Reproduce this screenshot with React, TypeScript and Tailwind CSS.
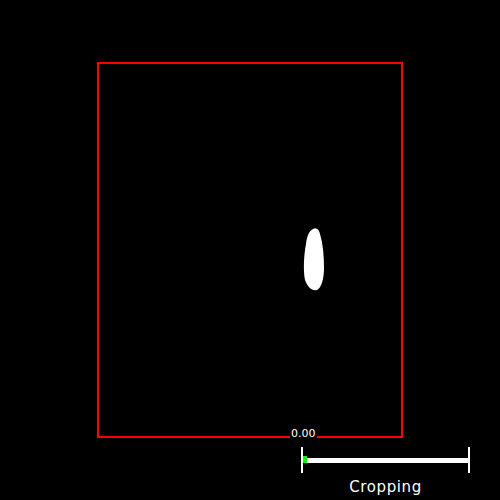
import React from 'react';

const App: React.FC = () => {
  const value = 0;

  return (
    <div className="relative w-[500px] h-[500px] bg-black overflow-hidden">
      {/* Crop region */}
      <div className="absolute left-[97px] top-[62px] w-[306px] h-[376px] border-2 border-solid border-[#ff0000]" />

      {/* Detected blob */}
      <svg className="absolute left-[300px] top-[224px]" width="30" height="70" viewBox="0 0 30 70">
        <path
          d="M13 5 C16 3 19 5 20 10 C23 20 24 32 24 44 C24 56 21 64 17 66 C12 67 8 64 5 56 C3 46 4 30 6 20 C7 12 9 7 13 5 Z"
          fill="#ffffff"
        />
      </svg>

      {/* Value label */}
      <span
        className="absolute left-[290px] top-[427px] px-[1px] bg-black text-white text-[11px] leading-[14px]"
        style={{ fontFamily: '"DejaVu Sans", sans-serif' }}
      >
        {value.toFixed(2)}
      </span>

      {/* Slider */}
      <div className="absolute left-[301px] top-[447px] w-[169px] flex flex-col items-center">
        <div className="w-full h-[26px] flex items-center">
          <div className="w-[2px] h-full bg-white" />
          <div className="relative flex-1 h-[5px] bg-white">
            <div className="absolute left-0 top-[-2px] w-[4px] h-[7px] bg-[#00ff00]" />
          </div>
          <div className="w-[2px] h-full bg-white" />
        </div>
        <span
          className="mt-[5px] text-white text-[15px] leading-[18px] tracking-[0.6px]"
          style={{ fontFamily: '"DejaVu Sans", sans-serif' }}
        >
          Cropping
        </span>
      </div>
    </div>
  );
};

export default App;
